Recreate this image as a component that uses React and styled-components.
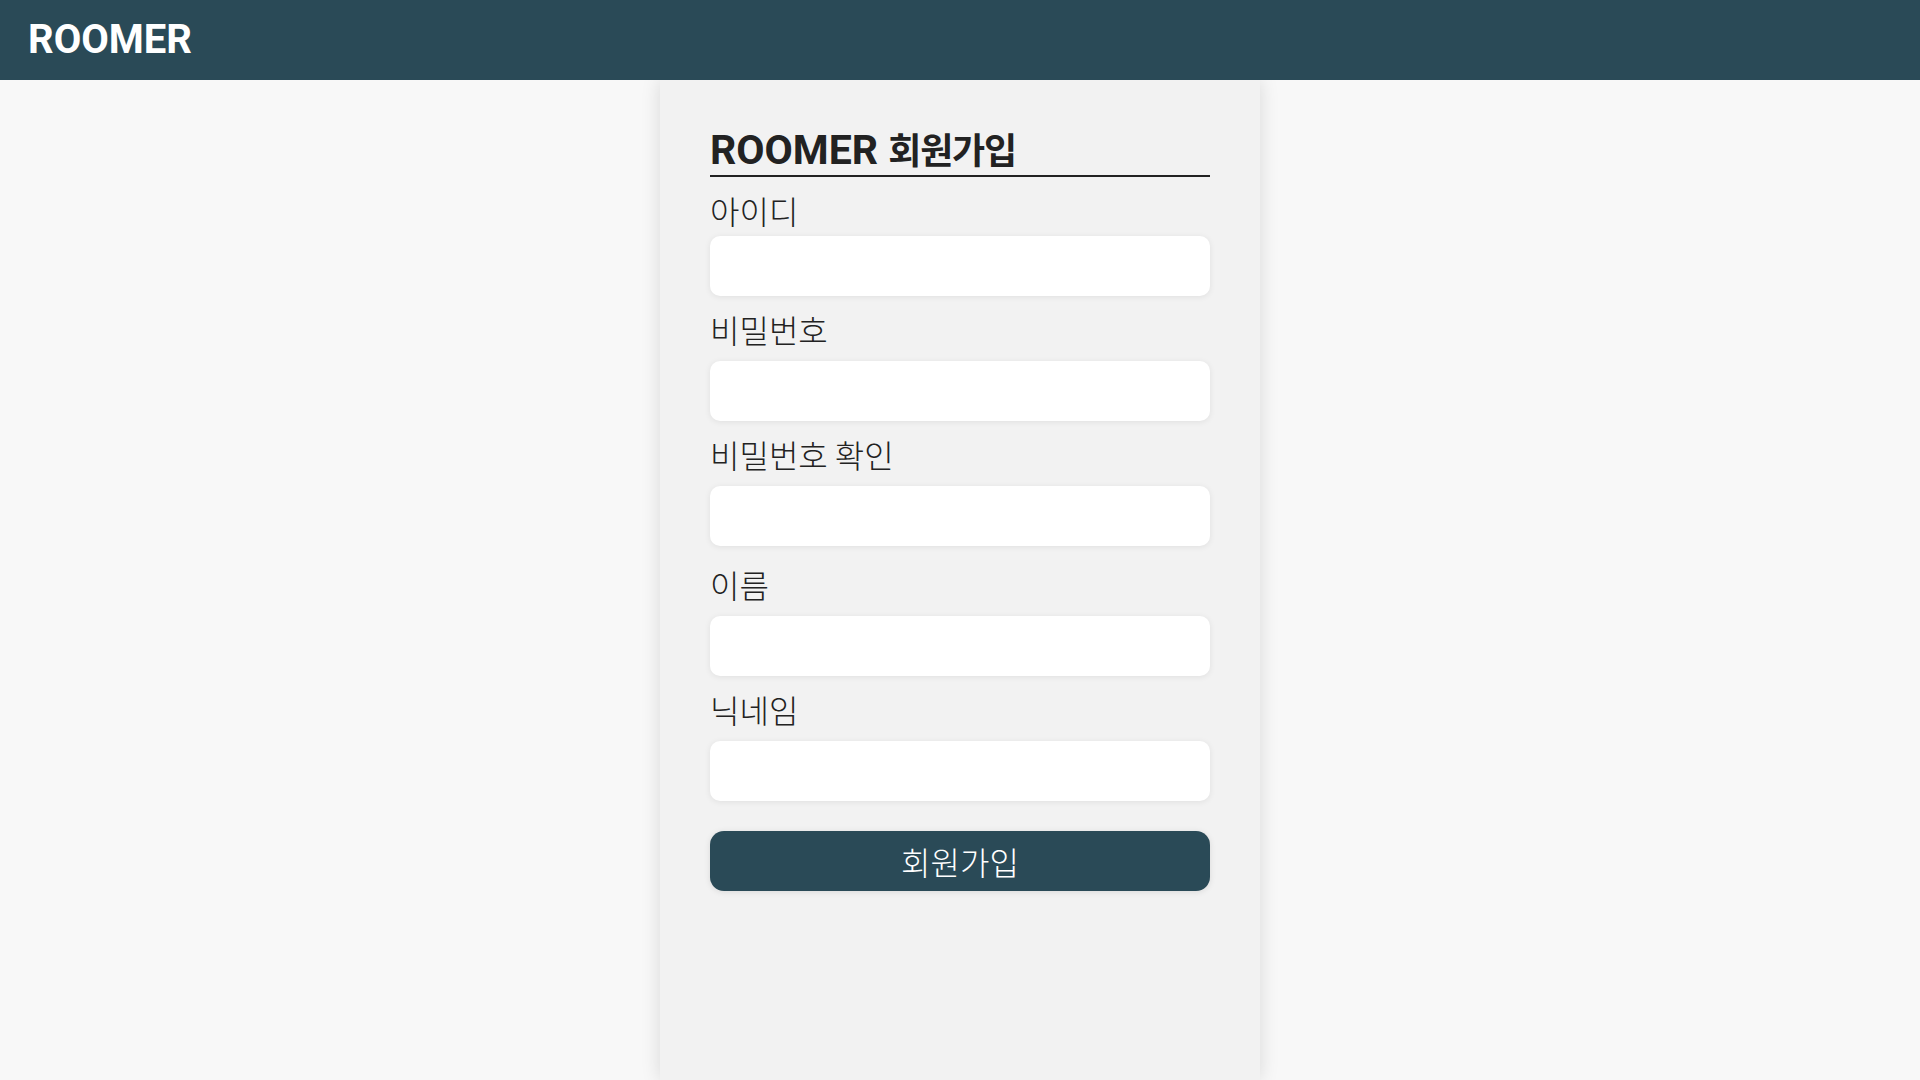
import React, { useState } from 'react';
import styled, { createGlobalStyle } from 'styled-components';

const fields = [
    { id: 'userId', label: '아이디', type: 'text', top: 17, gap: 10 },
    { id: 'password', label: '비밀번호', type: 'password' },
    { id: 'passwordCheck', label: '비밀번호 확인', type: 'password' },
    { id: 'name', label: '이름', type: 'text', top: 22 },
    { id: 'nickname', label: '닉네임', type: 'text' },
];

const App = () => {

    const [ form, setForm ] = useState({});

    const onChange = (e) => {
        setForm({ ...form, [e.target.name]: e.target.value });
    }

    return(
        <>
            <GlobalStyle />
            <Page>
                <Header>
                    <Logo>ROOMER</Logo>
                </Header>
                <Main>
                    <SignUpCard>
                        <Title>
                            ROOMER <TitleKo>회원가입</TitleKo>
                        </Title>
                        <Form onSubmit={(e) => e.preventDefault()}>
                            {fields.map((f) => (
                                <Field key={f.id} $top={f.top} $gap={f.gap}>
                                    <Label htmlFor={f.id}>{f.label}</Label>
                                    <Input
                                        id={f.id}
                                        name={f.id}
                                        type={f.type}
                                        value={form[f.id] || ''}
                                        onChange={onChange}
                                    />
                                </Field>
                            ))}
                            <SubmitButton type='submit'>회원가입</SubmitButton>
                        </Form>
                    </SignUpCard>
                </Main>
            </Page>
        </>
    )
}

export default App;


const GlobalStyle = createGlobalStyle`
    * {
        box-sizing:border-box;
    }
    body {
        margin:0;
        background:#f8f8f8;
        font-family:"Noto Sans CJK KR", "Noto Sans", sans-serif;
    }
`

const Page = styled.div`
    min-height:100vh;
    display:flex;
    flex-direction:column;
`

const Header = styled.header`
    height:80px;
    background:#2a4a57;
    display:flex;
    align-items:center;
    padding:0 28px 1px;
    position:relative;
    z-index:1;
`

const Logo = styled.h1`
    margin:0;
    color:#fff;
    font-family:"Roboto", sans-serif;
    font-weight:700;
    font-size:40px;
    line-height:1;
`

const Main = styled.main`
    flex:1;
    display:flex;
    justify-content:center;
`

const SignUpCard = styled.section`
    width:600px;
    min-height:calc(100vh - 80px);
    background:#f2f2f2;
    box-shadow:0 0 18px rgba(0,0,0,0.13);
    padding:50px 50px;
`

const Title = styled.h2`
    margin:0;
    padding-bottom:4px;
    border-bottom:2px solid #222;
    color:#222;
    font-family:"Roboto", "Noto Sans CJK KR", sans-serif;
    font-weight:700;
    font-size:41px;
    line-height:1;
`

const TitleKo = styled.span`
    font-family:"Noto Sans CJK KR", sans-serif;
    font-size:36px;
    letter-spacing:-1.2px;
`

const Form = styled.form`
    display:flex;
    flex-direction:column;
`

const Field = styled.div`
    display:flex;
    flex-direction:column;
    gap:${(p) => p.$gap || 16}px;
    margin-top:${(p) => p.$top || 17}px;
`

const Label = styled.label`
    font-family:"Noto Sans CJK KR", sans-serif;
    font-weight:300;
    font-size:32px;
    line-height:1;
    color:#222;
`

const Input = styled.input`
    height:60px;
    width:100%;
    border:none;
    border-radius:10px;
    background:#fff;
    box-shadow:0 1px 6px rgba(0,0,0,0.08);
    padding:0 16px;
    font-size:20px;
    outline:none;
`

const SubmitButton = styled.button`
    margin-top:30px;
    height:60px;
    width:100%;
    border:none;
    border-radius:14px;
    background:#2a4a57;
    box-shadow:0 1px 6px rgba(0,0,0,0.1);
    color:#fff;
    font-family:"Noto Sans CJK KR", sans-serif;
    font-weight:300;
    font-size:32px;
    line-height:1;
    cursor:pointer;
`
